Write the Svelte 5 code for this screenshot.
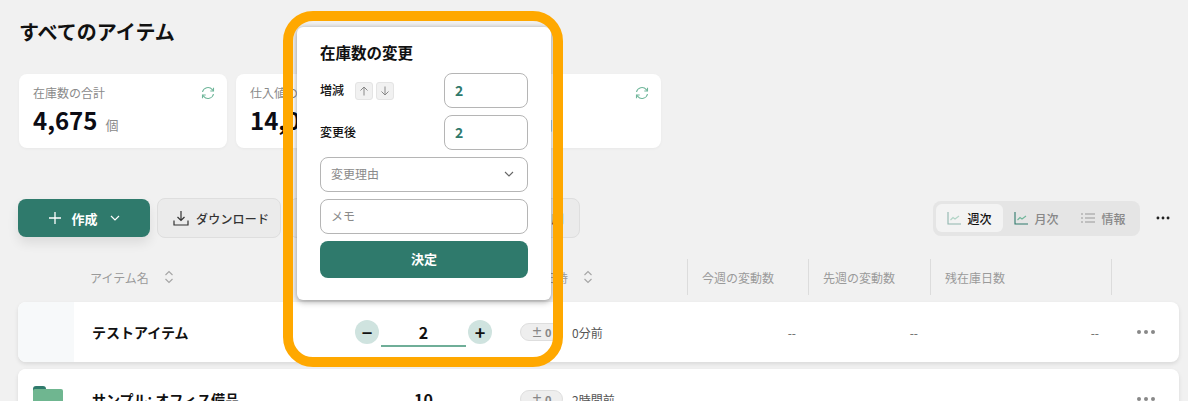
<script>
  const stats = [
    { label: '在庫数の合計', value: '4,675', unit: '個' },
    { label: '仕入値の合計', value: '14,000', unit: '円' },
    { label: '販売額の合計', value: '2,800', unit: '円' }
  ];

  const views = [
    { label: '週次', icon: 'chart', active: true },
    { label: '月次', icon: 'chart', active: false },
    { label: '情報', icon: 'list', active: false }
  ];
</script>

{#snippet sortIcon()}
  <svg class="sort" viewBox="0 0 10 14" width="10" height="14" fill="none" stroke="currentColor" stroke-width="1.1">
    <path d="M1.5 5 5 1.5 8.500 5M1.500 9 5 12.500 8.500 9" />
  </svg>
{/snippet}

{#snippet dots(cls)}
  <svg class={cls} viewBox="0 0 20 6" width="20" height="6" fill="currentColor">
    <circle cx="3" cy="3" r="2" /><circle cx="10" cy="3" r="2" /><circle cx="17" cy="3" r="2" />
  </svg>
{/snippet}

<div class="page">
  <h1>すべてのアイテム</h1>

  <section class="stats">
    {#each stats as s}
      <div class="stat">
        <div class="stat-top">
          <span>{s.label}</span>
          <svg viewBox="0 0 14 14" width="14" height="14" fill="none" stroke="#6fb69a" stroke-width="1.100">
            <path d="M1.500 6A5.600 5.600 0 0 1 11.300 3.600L12.500 5" />
            <path d="M12.500 1.800V5H9.300" />
            <path d="M12.500 8A5.600 5.600 0 0 1 2.700 10.400L1.500 9" />
            <path d="M1.500 12.200V9H4.700" />
          </svg>
        </div>
        <div class="stat-value"><b>{s.value}</b><span>{s.unit}</span></div>
      </div>
    {/each}
  </section>

  <div class="toolbar">
    <button class="create">
      <svg viewBox="0 0 14 14" width="14" height="14" fill="none" stroke="currentColor" stroke-width="1.300">
        <path d="M7 1v12M1 7h12" />
      </svg>
      <span>作成</span>
      <svg viewBox="0 0 10 6" width="10" height="6" fill="none" stroke="currentColor" stroke-width="1.200">
        <path d="M1 1l4 4 4-4" />
      </svg>
    </button>
    <button class="ghost download">
      <svg viewBox="0 0 16 16" width="16" height="16" fill="none" stroke="#333" stroke-width="1.200">
        <path d="M8 1v9.500M4.500 7 8 10.500 11.500 7M1 10.500V15h14v-4.500" />
      </svg>
      <span>ダウンロード</span>
    </button>
    <button class="ghost print"><span>印刷</span></button>

    <div class="views">
      {#each views as v}
        <div class="view" class:active={v.active}>
          {#if v.icon === 'chart'}
            <svg viewBox="0 0 14 14" width="14" height="14" fill="none" stroke="#2f7a6c" stroke-width="1.100" class:faint={v.active}>
              <path d="M1 1v12h13" />
              <path d="M3.500 9 6 6.500l2 1.500 4-3" stroke="#6fb69a" />
            </svg>
          {:else}
            <svg viewBox="0 0 14 14" width="14" height="14" fill="none" stroke="#999" stroke-width="1.200">
              <path d="M4 3h10M4 7h10M4 11h10M0 3h2M0 7h2M0 11h2" />
            </svg>
          {/if}
          <span>{v.label}</span>
        </div>
      {/each}
    </div>
    {@render dots('more')}
  </div>

  <div class="grid head">
    <div></div>
    <div class="hcell name">アイテム名 {@render sortIcon()}</div>
    <div></div>
    <div class="hcell updated">更新日時 {@render sortIcon()}</div>
    <div class="hcell line">今週の変動数</div>
    <div class="hcell line">先週の変動数</div>
    <div class="hcell line">残在庫日数</div>
    <div class="hcell line"></div>
  </div>

  <div class="grid row">
    <div class="thumb"></div>
    <div class="item-name">テストアイテム</div>
    <div class="stepper">
      <span class="round">−</span>
      <span class="qty editing">2</span>
      <span class="round">+</span>
    </div>
    <div class="status"><span class="badge">± 0</span><span>0分前</span></div>
    <div class="num">--</div>
    <div class="num">--</div>
    <div class="num">--</div>
    <div class="actions">{@render dots('row-more')}</div>
  </div>

  <div class="grid row">
    <div class="thumb folder">
      <svg viewBox="0 0 30 24" width="30" height="24">
        <path d="M0 4a3 3 0 0 1 3-3h7a3 3 0 0 1 3 3v2H0z" fill="#2f7a6c" />
        <path d="M0 6a2 2 0 0 1 2-2h26a2 2 0 0 1 2 2v16a2 2 0 0 1-2 2H2a2 2 0 0 1-2-2z" fill="#6fb690" />
      </svg>
    </div>
    <div class="item-name">サンプル: オフィス備品</div>
    <div class="stepper"><span class="qty">10</span></div>
    <div class="status"><span class="badge">± 0</span><span>2時間前</span></div>
    <div class="num">-</div>
    <div class="num">-</div>
    <div class="num">-</div>
    <div class="actions">{@render dots('row-more')}</div>
  </div>

  <div class="popover">
    <h2>在庫数の変更</h2>
    <div class="field">
      <label for="delta">増減</label>
      <span class="arrow">
        <svg viewBox="0 0 10 10" width="10" height="10" fill="none" stroke="#888" stroke-width="1"><path d="M5 9.500V1M1.500 4.500 5 1l3.500 3.500" /></svg>
      </span>
      <span class="arrow">
        <svg viewBox="0 0 10 10" width="10" height="10" fill="none" stroke="#888" stroke-width="1"><path d="M5 .5V9M1.500 5.500 5 9l3.500-3.500" /></svg>
      </span>
      <input id="delta" class="small" value="2" />
    </div>
    <div class="field">
      <label for="after">変更後</label>
      <input id="after" class="small" value="2" />
    </div>
    <div class="select">
      <span>変更理由</span>
      <svg viewBox="0 0 10 6" width="10" height="6" fill="none" stroke="#666" stroke-width="1.100"><path d="M1 1l4 4 4-4" /></svg>
    </div>
    <input class="memo" placeholder="メモ" />
    <button class="submit">決定</button>
  </div>

  <div class="highlight"></div>
</div>

<style>
  :global(body) {
    margin: 0;
    background: #f1f1f1;
  }

  .page {
    position: relative;
    height: 401px;
    overflow: hidden;
    padding: 0 9px 0 18px;
    box-sizing: border-box;
    font-family: "Noto Sans CJK JP", "Noto Sans", sans-serif;
    color: #111;
  }

  h1 {
    margin: 0;
    padding: 17px 0 0 1px;
    font-size: 20px;
    line-height: 30px;
    font-weight: 700;
  }

  .stats {
    display: flex;
    gap: 9px;
    margin: 27px 0 0 1px;
  }

  .stat {
    width: 208px;
    height: 74px;
    box-sizing: border-box;
    padding: 11px 12px 0 14px;
    background: #fff;
    border-radius: 8px;
    box-shadow: 0 1px 3px rgb(0 0 0 / 0.04);
  }

  .stat-top {
    display: flex;
    justify-content: space-between;
    align-items: center;
    font-size: 12px;
    line-height: 16px;
    color: #8a8a8a;
  }

  .stat-value {
    display: flex;
    align-items: baseline;
    gap: 8px;
    line-height: 32px;
    margin-top: 3px;
  }

  .stat-value b {
    font-size: 24px;
    font-weight: 700;
    color: #0c0c14;
  }

  .stat-value span {
    font-size: 13px;
    color: #8a8a8a;
  }

  .toolbar {
    display: flex;
    align-items: center;
    height: 40px;
    margin-top: 50px;
  }

  button {
    font: inherit;
    cursor: pointer;
  }

  .create {
    display: flex;
    align-items: center;
    justify-content: center;
    gap: 9px;
    width: 132px;
    height: 38px;
    border: 0;
    border-radius: 8px;
    background: #2f7a6c;
    color: #fff;
    font-size: 13px;
    font-weight: 700;
    box-shadow: 0 6px 12px rgb(0 0 0 / 0.09);
  }

  .create span {
    margin-right: 3px;
  }

  .ghost {
    display: flex;
    align-items: center;
    gap: 7px;
    height: 40px;
    box-sizing: border-box;
    border: 1px solid #dedede;
    border-radius: 8px;
    background: #ebebeb;
    color: #333;
    font-size: 12px;
    font-weight: 500;
    letter-spacing: 0.2px;
  }

  .download {
    width: 124px;
    margin-left: 7px;
    padding: 0 0 0 15px;
  }

  .print {
    width: 291px;
    margin-left: 8px;
    padding: 0 15px 0 0;
    justify-content: flex-end;
  }

  .views {
    display: flex;
    align-items: center;
    gap: 0;
    height: 35px;
    width: 207px;
    box-sizing: border-box;
    margin-left: auto;
    padding: 0 3px;
    background: #e5e5e5;
    border-radius: 8px;
  }

  .view {
    display: flex;
    align-items: center;
    justify-content: center;
    gap: 6px;
    width: 67px;
    height: 28px;
    border-radius: 6px;
    font-size: 12px;
    font-weight: 500;
    color: #888;
  }

  .view.active {
    background: #f3f3f3;
    color: #111;
  }

  .faint {
    opacity: 0.5;
  }

  .more {
    margin: 0 6px 0 13px;
    transform: scale(0.72);
    color: #222;
  }

  .grid {
    display: grid;
    grid-template-columns: 56px 266px 168px 179px 121px 122px 181px 68px;
    width: 1161px;
  }

  .head {
    height: 36px;
    margin-top: 21px;
    font-size: 12px;
    color: #9a9a9a;
  }

  .hcell {
    display: flex;
    align-items: center;
    gap: 7px;
  }

  .hcell.name {
    padding-left: 16px;
    gap: 15px;
  }

  .hcell.updated {
    padding-left: 12px;
    gap: 15px;
  }

  .hcell.line {
    padding-left: 14px;
    border-left: 1px solid #dcdcdc;
  }

  .sort {
    color: #a5a5a5;
  }

  .row {
    height: 60px;
    margin-top: 7px;
    align-items: center;
    background: #fff;
    border-radius: 8px;
    box-shadow: 0 2px 4px rgb(0 0 0 / 0.1);
    overflow: hidden;
  }

  .thumb {
    height: 100%;
    background: #f7f9fa;
  }

  .thumb.folder {
    display: flex;
    justify-content: center;
    padding: 16px 0 0 3px;
    box-sizing: border-box;
    background: #fff;
  }

  .item-name {
    padding-left: 18px;
    font-size: 14px;
    font-weight: 700;
  }

  .stepper {
    display: flex;
    align-items: center;
    justify-content: center;
    gap: 2px;
    padding-right: 1px;
  }

  .round {
    display: flex;
    align-items: center;
    justify-content: center;
    width: 24px;
    height: 24px;
    border-radius: 50%;
    background: #cfe3df;
    font-size: 18px;
    font-weight: 700;
    line-height: 1;
  }

  .qty {
    width: 85px;
    text-align: center;
    font-size: 16px;
    font-weight: 700;
    line-height: 24px;
  }

  .qty.editing {
    border-bottom: 2px solid #6fae98;
    padding-bottom: 1px;
    margin-top: 2px;
  }

  .status {
    display: flex;
    align-items: center;
    gap: 9px;
    padding-left: 12px;
    font-size: 12px;
    color: #555;
  }

  .badge {
    width: 43px;
    height: 18px;
    box-sizing: border-box;
    border: 1px solid #dedede;
    border-radius: 9px;
    background: #eee;
    color: #888;
    font-size: 11px;
    font-weight: 700;
    line-height: 16px;
    text-align: center;
  }

  .num {
    padding-right: 12px;
    text-align: right;
    font-size: 12px;
    color: #666;
  }

  .actions {
    display: flex;
    padding-left: 25px;
    color: #888;
  }

  .popover {
    position: absolute;
    left: 297px;
    top: 27px;
    width: 254px;
    height: 273px;
    box-sizing: border-box;
    padding: 14px 23px 0;
    display: flex;
    flex-direction: column;
    gap: 7px;
    background: #fff;
    border-radius: 6px;
    box-shadow: 0 2px 6px rgb(0 0 0 / 0.3), 0 0 5px rgb(0 0 0 / 0.12);
  }

  h2 {
    margin: 0;
    font-size: 15.500px;
    line-height: 23px;
    font-weight: 700;
    height: 25px;
  }

  .field {
    display: flex;
    align-items: center;
    gap: 3px;
    font-size: 12px;
    font-weight: 500;
  }

  .field label {
    margin-right: 8px;
    position: relative;
    top: -1px;
  }

  .arrow {
    display: flex;
    align-items: center;
    justify-content: center;
    width: 16px;
    height: 16px;
    border: 1px solid #e4e4e4;
    border-radius: 3px;
    background: #f1f1f1;
  }

  input {
    box-sizing: border-box;
    height: 35px;
    border: 1px solid #b5b5b5;
    border-radius: 8px;
    padding: 0 10px 2px;
    background: #fff;
    font: inherit;
    font-size: 12px;
    outline: none;
  }

  input.small {
    width: 84px;
    margin-left: auto;
    color: #2f7a6c;
    font-size: 14px;
    font-weight: 700;
  }

  input::placeholder {
    color: #8a8a8a;
  }

  .memo {
    width: 100%;
  }

  .select {
    display: flex;
    align-items: center;
    justify-content: space-between;
    height: 35px;
    box-sizing: border-box;
    padding: 0 13px 3px 10px;
    border: 1px solid #b5b5b5;
    border-radius: 8px;
    font-size: 12px;
    color: #8a8a8a;
  }

  .select svg {
    margin-top: 2px;
  }

  .submit {
    height: 37px;
    padding-bottom: 3px;
    border: 0;
    border-radius: 8px;
    background: #2f7a6c;
    color: #fff;
    font-size: 13px;
    font-weight: 700;
  }

  .highlight {
    position: absolute;
    left: 283px;
    top: 11px;
    width: 280px;
    height: 356px;
    box-sizing: border-box;
    border: 10px solid #ffa800;
    border-radius: 30px;
    pointer-events: none;
  }
</style>
